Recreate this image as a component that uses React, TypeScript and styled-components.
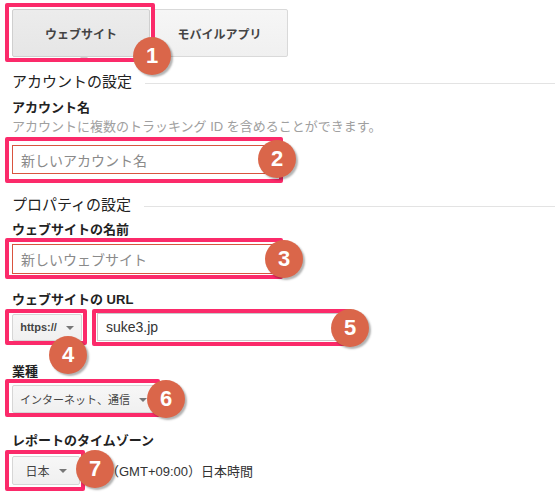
import React from 'react';
import styled, { createGlobalStyle } from 'styled-components';

const GlobalStyle = createGlobalStyle`
  html, body {
    margin: 0;
    padding: 0;
    background: #ffffff;
  }
  body {
    font-family: "Liberation Sans", "Noto Sans CJK JP", sans-serif;
    color: #222;
  }
`;

const PINK = '#fb2a6a';

const Page = styled.div`
  width: 555px;
  height: 496px;
  overflow: hidden;
  box-sizing: border-box;
  padding: 9px 0 0 12px;
`;

const Tabs = styled.div`
  display: flex;
  gap: 1px;
`;

const Tab = styled.div<{ $active?: boolean }>`
  position: relative;
  width: ${(p) => (p.$active ? 136 : 135)}px;
  height: 46px;
  display: flex;
  align-items: center;
  justify-content: center;
  border: 1px solid ${(p) => (p.$active ? '#cfcfcf' : '#d9d9d9')};
  border-radius: 2px;
  background: ${(p) => (p.$active ? 'linear-gradient(#ececec, #e6e6e6)' : 'linear-gradient(#f6f6f6, #f0f0f0)')};
  font-size: 12px;
  font-weight: bold;
  color: #444;
`;

const TabPointer = styled.span`
  position: absolute;
  left: 66px;
  bottom: -5px;
  width: 0;
  height: 0;
  border-left: 5px solid transparent;
  border-right: 5px solid transparent;
  border-top: 5px solid #d0d0d0;
`;

const SectionHeading = styled.div<{ $mt: number }>`
  display: flex;
  align-items: center;
  margin-top: ${(p) => p.$mt}px;
  height: 20px;
  font-size: 15px;
  color: #222;
  &::after {
    content: '';
    flex: 1;
    height: 1px;
    background: #e3e3e3;
    margin-left: 13px;
    margin-top: 6px;
  }
`;

const Label = styled.div<{ $mt: number }>`
  margin-top: ${(p) => p.$mt}px;
  height: 20px;
  line-height: 20px;
  font-size: 13px;
  font-weight: bold;
  color: #222;
`;

const Help = styled.div`
  height: 18px;
  line-height: 18px;
  font-size: 13px;
  color: #a0a0a0;
`;

const Row = styled.div<{ $mt: number }>`
  display: flex;
  align-items: center;
  gap: 15px;
  margin-top: ${(p) => p.$mt}px;
`;

const Annotated = styled.div`
  position: relative;
  display: inline-flex;
`;

const Frame = styled.span<{ $t: number; $r: number; $b: number; $l: number }>`
  position: absolute;
  top: ${(p) => p.$t}px;
  right: ${(p) => p.$r}px;
  bottom: ${(p) => p.$b}px;
  left: ${(p) => p.$l}px;
  border: 4px solid ${PINK};
  border-radius: 2px;
  pointer-events: none;
  z-index: 2;
`;

const Badge = styled.span<{ $x: number; $y: number }>`
  position: absolute;
  left: ${(p) => p.$x - 19}px;
  top: ${(p) => p.$y - 19}px;
  width: 38px;
  height: 38px;
  border-radius: 50%;
  background: #da664a;
  box-shadow: 2px 2px 2px rgba(0, 0, 0, 0.3);
  color: #fff;
  font-family: "Liberation Sans", sans-serif;
  font-weight: bold;
  font-size: 22px;
  display: flex;
  align-items: center;
  justify-content: center;
  z-index: 3;
`;

const TextInput = styled.div<{ $w: number; $h: number; $accent?: boolean; $placeholder?: boolean }>`
  width: ${(p) => p.$w}px;
  height: ${(p) => p.$h}px;
  box-sizing: border-box;
  border: 1px solid ${(p) => (p.$accent ? '#d9533f' : '#c9c9c9')};
  display: flex;
  align-items: center;
  padding-left: 8px;
  font-size: 14px;
  color: ${(p) => (p.$placeholder ? '#8a8a8a' : '#333')};
  background: #fff;
`;

const DropButton = styled.div<{ $w: number; $h: number; $bold?: boolean; $size?: number }>`
  width: ${(p) => p.$w}px;
  height: ${(p) => p.$h}px;
  box-sizing: border-box;
  border: 1px solid #d6d6d6;
  border-radius: 2px;
  background: linear-gradient(#f7f7f7, #f0f0f0);
  display: flex;
  align-items: center;
  justify-content: center;
  gap: 9px;
  font-size: ${(p) => p.$size ?? (p.$bold ? 11 : 12)}px;
  font-weight: ${(p) => (p.$bold ? 'bold' : 'normal')};
  color: #444;
  white-space: nowrap;
`;

const Caret = styled.span`
  flex: none;
  width: 0;
  height: 0;
  border-left: 4px solid transparent;
  border-right: 4px solid transparent;
  border-top: 4px solid #777;
  margin-top: 1px;
`;

const ZoneText = styled.span`
  font-size: 13px;
  color: #333;
  margin-left: 11px;
`;

const Block = styled.div<{ $mt: number }>`
  margin-top: ${(p) => p.$mt}px;
`;

export default function App() {
  return (
    <Page>
      <GlobalStyle />
      <Tabs>
        <Annotated>
          <Tab $active>
            ウェブサイト
            <TabPointer />
          </Tab>
          <Frame $t={-6} $r={-5} $b={-5} $l={-7} />
          <Badge $x={140} $y={47}>1</Badge>
        </Annotated>
        <Tab>モバイルアプリ</Tab>
      </Tabs>

      <SectionHeading $mt={13}>アカウントの設定</SectionHeading>
      <Label $mt={8}>アカウント名</Label>
      <Help>アカウントに複数のトラッキング ID を含めることができます。</Help>
      <Block $mt={9}>
        <Annotated>
          <TextInput $w={265} $h={29} $accent $placeholder>新しいアカウント名</TextInput>
          <Frame $t={-8} $r={-6} $b={-9} $l={-7} />
          <Badge $x={265} $y={14}>2</Badge>
        </Annotated>
      </Block>

      <SectionHeading $mt={19}>プロパティの設定</SectionHeading>
      <Label $mt={7}>ウェブサイトの名前</Label>
      <Block $mt={4}>
        <Annotated>
          <TextInput $w={265} $h={30} $accent $placeholder>新しいウェブサイト</TextInput>
          <Frame $t={-6} $r={-6} $b={-5} $l={-7} />
          <Badge $x={272} $y={15}>3</Badge>
        </Annotated>
      </Block>

      <Label $mt={16}>ウェブサイトの URL</Label>
      <Row $mt={3}>
        <Annotated>
          <DropButton $w={70} $h={27} $bold>
            https://
            <Caret />
          </DropButton>
          <Frame $t={-5} $r={-5} $b={-4} $l={-7} />
          <Badge $x={56} $y={41}>4</Badge>
        </Annotated>
        <Annotated>
          <TextInput $w={248} $h={28}>suke3.jp</TextInput>
          <Frame $t={-4} $r={-7} $b={-5} $l={-5} />
          <Badge $x={253} $y={15}>5</Badge>
        </Annotated>
      </Row>

      <Label $mt={21}>業種</Label>
      <Block $mt={3}>
        <Annotated>
          <DropButton $w={143} $h={28} $size={11}>
            インターネット、通信
            <Caret />
          </DropButton>
          <Frame $t={-6} $r={-5} $b={-4} $l={-7} />
          <Badge $x={154} $y={14}>6</Badge>
        </Annotated>
      </Block>

      <Label $mt={18}>レポートのタイムゾーン</Label>
      <Row $mt={5}>
        <Annotated>
          <DropButton $w={68} $h={29}>
            日本
            <Caret />
          </DropButton>
          <Frame $t={-6} $r={-5} $b={-6} $l={-7} />
          <Badge $x={83} $y={13}>7</Badge>
        </Annotated>
        <ZoneText>（GMT+09:00）日本時間</ZoneText>
      </Row>
    </Page>
  );
}
